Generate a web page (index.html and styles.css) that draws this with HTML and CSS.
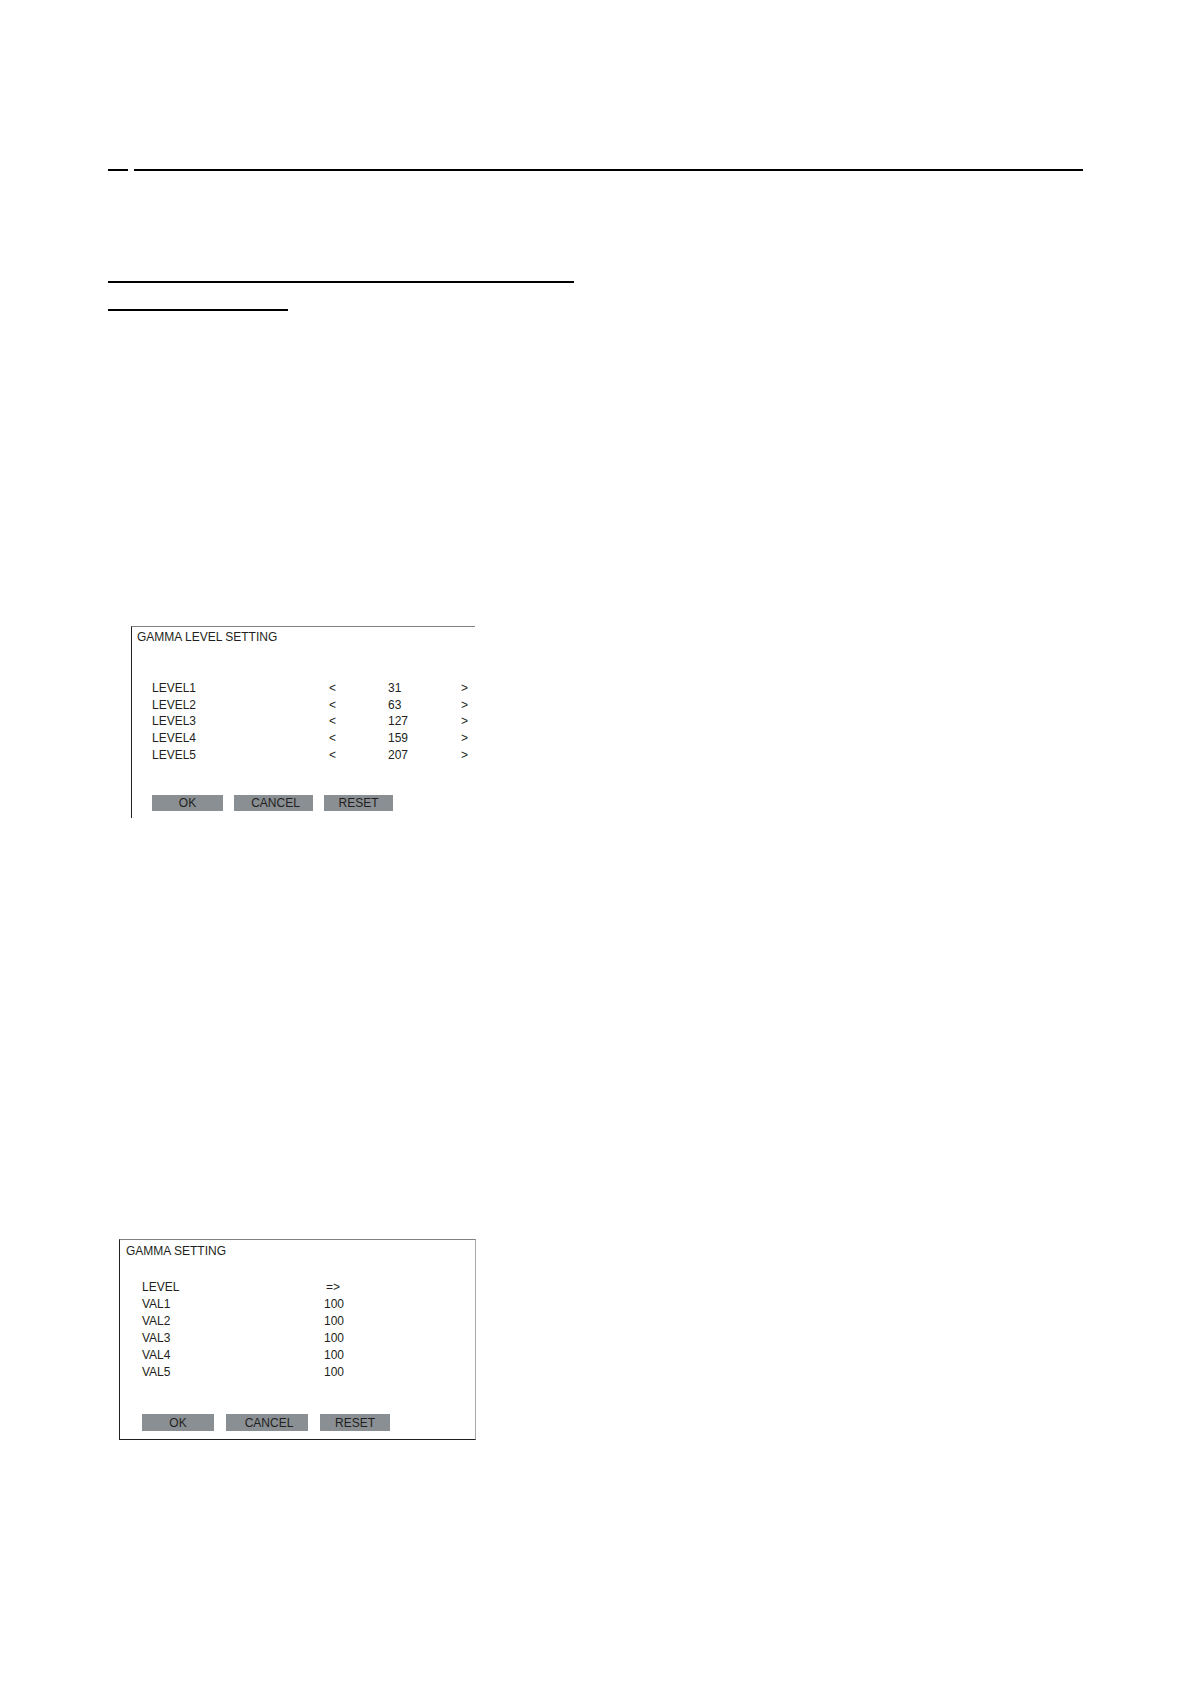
FILE: index.html
```
<!DOCTYPE html>
<html lang="en">
<head>
    <meta charset="utf-8">
    <title>Gamma Setting</title>
    <link rel="stylesheet" href="styles.css">
</head>
<body>
    <main class="page">
        <!-- Chapter rule: short number part, then the title part -->
        <div class="chapter-rule">
            <hr class="rule rule-number">
            <hr class="rule rule-title">
        </div>

        <div class="section-rules">
            <hr class="rule rule-long">
            <hr class="rule rule-short">
        </div>

        <section class="panel level-panel">
            <h2>GAMMA LEVEL SETTING</h2>
            <table class="level-table">
                <tr>
                    <th scope="row">LEVEL1</th>
                    <td class="down"><button class="step" aria-label="Decrease level 1">&lt;</button></td>
                    <td class="value">31</td>
                    <td><button class="step" aria-label="Increase level 1">&gt;</button></td>
                </tr>
                <tr>
                    <th scope="row">LEVEL2</th>
                    <td class="down"><button class="step" aria-label="Decrease level 2">&lt;</button></td>
                    <td class="value">63</td>
                    <td><button class="step" aria-label="Increase level 2">&gt;</button></td>
                </tr>
                <tr>
                    <th scope="row">LEVEL3</th>
                    <td class="down"><button class="step" aria-label="Decrease level 3">&lt;</button></td>
                    <td class="value">127</td>
                    <td><button class="step" aria-label="Increase level 3">&gt;</button></td>
                </tr>
                <tr>
                    <th scope="row">LEVEL4</th>
                    <td class="down"><button class="step" aria-label="Decrease level 4">&lt;</button></td>
                    <td class="value">159</td>
                    <td><button class="step" aria-label="Increase level 4">&gt;</button></td>
                </tr>
                <tr>
                    <th scope="row">LEVEL5</th>
                    <td class="down"><button class="step" aria-label="Decrease level 5">&lt;</button></td>
                    <td class="value">207</td>
                    <td><button class="step" aria-label="Increase level 5">&gt;</button></td>
                </tr>
            </table>
            <div class="actions">
                <button class="action ok">OK</button>
                <button class="action cancel">CANCEL</button>
                <button class="action reset">RESET</button>
            </div>
        </section>

        <section class="panel gamma-panel">
            <h2>GAMMA SETTING</h2>
            <table class="gamma-table">
                <tr>
                    <th scope="row">LEVEL</th>
                    <td class="arrow"><button class="step" aria-label="Go to level setting">=&gt;</button></td>
                </tr>
                <tr><th scope="row">VAL1</th><td>100</td></tr>
                <tr><th scope="row">VAL2</th><td>100</td></tr>
                <tr><th scope="row">VAL3</th><td>100</td></tr>
                <tr><th scope="row">VAL4</th><td>100</td></tr>
                <tr><th scope="row">VAL5</th><td>100</td></tr>
            </table>
            <div class="actions">
                <button class="action ok">OK</button>
                <button class="action cancel">CANCEL</button>
                <button class="action reset">RESET</button>
            </div>
        </section>
    </main>
</body>
</html>
```
FILE: styles.css
```
* {
    box-sizing: border-box;
}

body {
    margin: 0;
    background-color: #fff;
    color: #231f20;
    font-family: "Liberation Sans", Arial, sans-serif;
    font-size: 12px;
    line-height: 16px;
}

.page {
    padding: 169px 107px 240px 108px;
}

.rule {
    height: 2px;
    margin: 0;
    border: none;
    background-color: #000;
}

.chapter-rule {
    display: flex;
    gap: 6px;
}

.rule-number {
    width: 20px;
}

.rule-title {
    flex: 1;
}

.section-rules {
    display: flex;
    flex-direction: column;
    gap: 26px;
    max-width: 466px;
    margin-top: 110px;
}

.rule-short {
    width: 180px;
}

/* Setting screens */
.panel {
    border: 0 solid #231f20;
}

.panel h2 {
    margin: 0;
    font-size: 12px;
    font-weight: normal;
}

.level-panel {
    max-width: 344px;
    margin: 315px 0 0 23px;
    padding: 2px 0 7px 5px;
    border-left-width: 1px;
    border-top: 1px solid #808285;
}

.gamma-panel {
    max-width: 357px;
    margin: 421px 0 0 11px;
    padding: 3px 0 8px 6px;
    border-width: 1px;
    border-top-color: #808285;
    border-right-color: #a7a9ac;
}

table {
    border-collapse: collapse;
    table-layout: fixed;
    text-align: left;
}

th,
td {
    padding: 0;
    font-weight: normal;
}

.level-table {
    width: 323px;
    height: 83px;
    margin: 35px 0 0 15px;
}

.level-table th {
    width: 177px;
}

.level-table .down {
    width: 59px;
}

.level-table .value {
    width: 73px;
}

.gamma-table {
    margin: 19px 0 0 16px;
}

.gamma-table th {
    width: 182px;
}

.gamma-table th,
.gamma-table td {
    height: 17px;
}

.gamma-table .arrow {
    padding: 1px 0 0 2px;
}

button {
    display: block;
    padding: 0;
    border: none;
    color: inherit;
    font: inherit;
    cursor: pointer;
}

.step {
    background: none;
}

.actions {
    display: flex;
    gap: 11px;
    margin: 32px 0 0 15px;
}

.action {
    background-color: #8a8f94;
}

.action:hover {
    background-color: #9da2a6;
}

.ok {
    width: 71px;
}

.cancel {
    width: 79px;
    padding-left: 4px;
}

.reset {
    width: 69px;
}

.gamma-panel .actions {
    gap: 12px;
    margin: 34px 0 0 16px;
}

.gamma-panel .action {
    height: 17px;
}

.gamma-panel .ok {
    width: 72px;
}

.gamma-panel .cancel {
    width: 82px;
}

.gamma-panel .reset {
    width: 70px;
}
```
